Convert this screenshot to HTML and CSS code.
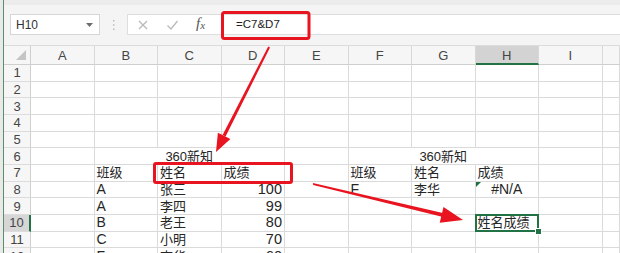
FILE: index.html
```html
<!DOCTYPE html>
<html lang="zh">
<head>
<meta charset="utf-8">
<link rel="stylesheet" href="styles.css">
</head>
<body>
<div class="app">
  <div class="topstrip"></div>
  <div class="fbar">
    <div class="namebox"><span>H10</span><svg class="dd" width="7" height="4" viewBox="0 0 7 4"><path d="M0 0h7L3.5 4z" fill="#6d6d6d"/></svg></div>
    <div class="dots"><svg width="3" height="12" viewBox="0 0 3 12"><rect x="1" y="1" width="1.4" height="1.4" fill="#b4b4b4"/><rect x="1" y="5.3" width="1.4" height="1.4" fill="#b4b4b4"/><rect x="1" y="9.6" width="1.4" height="1.4" fill="#b4b4b4"/></svg></div>
    <div class="fbtns">
      <svg class="ico" width="12" height="12" viewBox="0 0 12 12"><path d="M2 2l8 8M10 2l-8 8" stroke="#b9b9b9" stroke-width="1.3" fill="none"/></svg>
      <svg class="ico" width="13" height="12" viewBox="0 0 13 12"><path d="M1.5 6.5l3.5 3.5 6.5-8" stroke="#b9b9b9" stroke-width="1.3" fill="none"/></svg>
      <span class="fx">f<sub>x</sub></span>
    </div>
    <div class="finput">=C7&amp;D7</div>
  </div>
  <div class="sheet">
    <div class="corner"><span class="tri"></span></div>
    <div class="ch">A</div><div class="ch">B</div><div class="ch">C</div><div class="ch">D</div><div class="ch">E</div><div class="ch">F</div><div class="ch">G</div><div class="ch hsel">H</div><div class="ch">I</div><div class="ch"></div>

    <div class="rh">1</div><div class="c"></div><div class="c"></div><div class="c"></div><div class="c"></div><div class="c"></div><div class="c"></div><div class="c"></div><div class="c"></div><div class="c"></div><div class="c"></div>
    <div class="rh">2</div><div class="c"></div><div class="c"></div><div class="c"></div><div class="c"></div><div class="c"></div><div class="c"></div><div class="c"></div><div class="c"></div><div class="c"></div><div class="c"></div>
    <div class="rh">3</div><div class="c"></div><div class="c"></div><div class="c"></div><div class="c"></div><div class="c"></div><div class="c"></div><div class="c"></div><div class="c"></div><div class="c"></div><div class="c"></div>
    <div class="rh">4</div><div class="c"></div><div class="c"></div><div class="c"></div><div class="c"></div><div class="c"></div><div class="c"></div><div class="c"></div><div class="c"></div><div class="c"></div><div class="c"></div>
    <div class="rh">5</div><div class="c"></div><div class="c"></div><div class="c"></div><div class="c"></div><div class="c"></div><div class="c"></div><div class="c"></div><div class="c"></div><div class="c"></div><div class="c"></div>
    <div class="rh">6</div><div class="c"></div><div class="c merge">360新知</div><div class="c"></div><div class="c merge">360新知</div><div class="c"></div><div class="c"></div>
    <div class="rh">7</div><div class="c"></div><div class="c">班级</div><div class="c">姓名</div><div class="c">成绩</div><div class="c"></div><div class="c">班级</div><div class="c">姓名</div><div class="c">成绩</div><div class="c"></div><div class="c"></div>
    <div class="rh">8</div><div class="c"></div><div class="c lat">A</div><div class="c">张三</div><div class="c num">100</div><div class="c"></div><div class="c lat">F</div><div class="c">李华</div><div class="c err"><span class="flag"></span>#N/A</div><div class="c"></div><div class="c"></div>
    <div class="rh">9</div><div class="c"></div><div class="c lat">A</div><div class="c">李四</div><div class="c num">99</div><div class="c"></div><div class="c"></div><div class="c"></div><div class="c"></div><div class="c"></div><div class="c"></div>
    <div class="rh rsel">10</div><div class="c"></div><div class="c lat">B</div><div class="c">老王</div><div class="c num">80</div><div class="c"></div><div class="c"></div><div class="c"></div><div class="c sel">姓名成绩<span class="handle"></span></div><div class="c"></div><div class="c"></div>
    <div class="rh">11</div><div class="c"></div><div class="c lat">C</div><div class="c">小明</div><div class="c num">70</div><div class="c"></div><div class="c"></div><div class="c"></div><div class="c"></div><div class="c"></div><div class="c"></div>
    <div class="rh">12</div><div class="c"></div><div class="c lat">F</div><div class="c">李华</div><div class="c num">60</div><div class="c"></div><div class="c"></div><div class="c"></div><div class="c"></div><div class="c"></div><div class="c"></div>
  </div>
</div>
<svg class="notes" width="620" height="253" viewBox="0 0 620 253">
  <rect x="222.5" y="12.5" width="86.5" height="26" rx="2" fill="none" stroke="#e8141f" stroke-width="3"/>
  <rect x="154.5" y="163.5" width="137" height="19" rx="1.5" fill="none" stroke="#e8141f" stroke-width="3"/>
  <path d="M268.2 46.6 L270 47.4 L225.6 136.6 L222.6 135.1 Z" fill="#e8141f"/>
  <path d="M216 152 L217.9 132.7 L230.4 139 Z" fill="#e8141f"/>
  <path d="M312.8 183 L313.2 185 L442 216.7 L442.8 213 Z" fill="#e8141f"/>
  <path d="M463 220 L443.5 207.1 L439.7 222.7 Z" fill="#e8141f"/>
</svg>
</body>
</html>
```
FILE: styles.css
```css
html, body {
  margin: 0;
  padding: 0;
}
body {
  position: relative;
  width: 620px;
  height: 253px;
  overflow: hidden;
  background: #e9e9e9;
  font-family: "Liberation Sans", "Noto Sans CJK SC", sans-serif;
  color: #262626;
}
.app {
  margin-left: 3px;
  border-left: 1px solid #5a8f69;
  height: 253px;
  background: #fff;
  display: flex;
  flex-direction: column;
}
.topstrip {
  height: 5px;
  background: #ececec;
  flex: none;
}
.fbar {
  flex: none;
  height: 41px;
  box-sizing: border-box;
  background: #f4f4f4;
  border-bottom: 1px solid #dcdcdc;
  display: flex;
  align-items: flex-start;
  padding-top: 9px;
}
.namebox {
  margin-left: 6px;
  width: 90px;
  height: 21px;
  box-sizing: border-box;
  background: #fff;
  border: 1px solid #d6d6d6;
  display: flex;
  align-items: center;
  justify-content: space-between;
  padding: 0 6px 0 5px;
  font-size: 12px;
  color: #333;
}
.dots {
  width: 27px;
  height: 21px;
  display: flex;
  align-items: center;
  justify-content: center;
}
.fbtns {
  width: 94px;
  height: 21px;
  box-sizing: border-box;
  background: #fff;
  border: 1px solid #dedede;
  border-right: none;
  display: flex;
  align-items: center;
  padding-left: 9px;
  gap: 17px;
}
.fx {
  font-family: "Liberation Serif", serif;
  font-style: italic;
  font-size: 15px;
  line-height: 15px;
  color: #555;
  margin-left: 0;
}
.fx sub {
  font-size: 11px;
  vertical-align: -1px;
}
.finput {
  flex: 1;
  height: 21px;
  box-sizing: border-box;
  background: #fff;
  border: 1px solid #dedede;
  border-right: none;
  font-size: 11.5px;
  line-height: 19px;
  padding-left: 14px;
  color: #222;
}
.sheet {
  flex: none;
  display: grid;
  grid-template-columns: 27px repeat(9, 63.5px) 1fr;
  grid-template-rows: 19px repeat(12, 16.67px);
}
.corner, .ch, .rh {
  background: #f6f6f6;
  color: #454545;
  font-size: 13px;
  box-sizing: border-box;
  display: flex;
  align-items: center;
  justify-content: center;
}
.corner {
  position: relative;
  border-right: 1px solid #cfcfcf;
  border-bottom: 1px solid #cfcfcf;
}
.tri {
  position: absolute;
  right: 4px;
  bottom: 4px;
  width: 0;
  height: 0;
  border-left: 10px solid transparent;
  border-bottom: 10px solid #c4c4c4;
}
.ch {
  border-right: 1px solid #d8d8d8;
  border-bottom: 1px solid #cfcfcf;
  padding-top: 1px;
}
.ch.hsel {
  background: #d3d3d3;
  border-bottom: 2px solid #217346;
}
.rh {
  border-right: 1px solid #cfcfcf;
  border-bottom: 1px solid #dcdcdc;
}
.rh.rsel {
  background: #d6d6d6;
  border-right: 2px solid #217346;
}
.c {
  box-sizing: border-box;
  border-right: 1px solid #dadada;
  border-bottom: 1px solid #dadada;
  font-size: 13px;
  line-height: 15px;
  padding: 0 2px 0 2px;
  white-space: nowrap;
  display: flex;
  align-items: center;
  background: #fff;
}
.c.lat {
  font-size: 14px;
}
.c.merge {
  grid-column: span 3;
  justify-content: center;
}
.c.num {
  justify-content: flex-end;
  font-size: 14.5px;
}
.c.err {
  position: relative;
  justify-content: center;
  font-size: 14px;
}
.flag {
  position: absolute;
  left: 0;
  top: 0;
  width: 0;
  height: 0;
  border-top: 5px solid #1e7145;
  border-right: 5px solid transparent;
}
.c.sel {
  position: relative;
  overflow: visible;
}
.c.sel::after {
  content: "";
  position: absolute;
  left: -1px;
  top: -1px;
  right: -1px;
  bottom: -1px;
  border: 2px solid #217346;
}
.handle {
  position: absolute;
  right: -4px;
  bottom: -4px;
  width: 5px;
  height: 5px;
  background: #217346;
  border: 1px solid #fff;
  z-index: 2;
}
.notes {
  position: absolute;
  left: 0;
  top: 0;
  pointer-events: none;
}
```
